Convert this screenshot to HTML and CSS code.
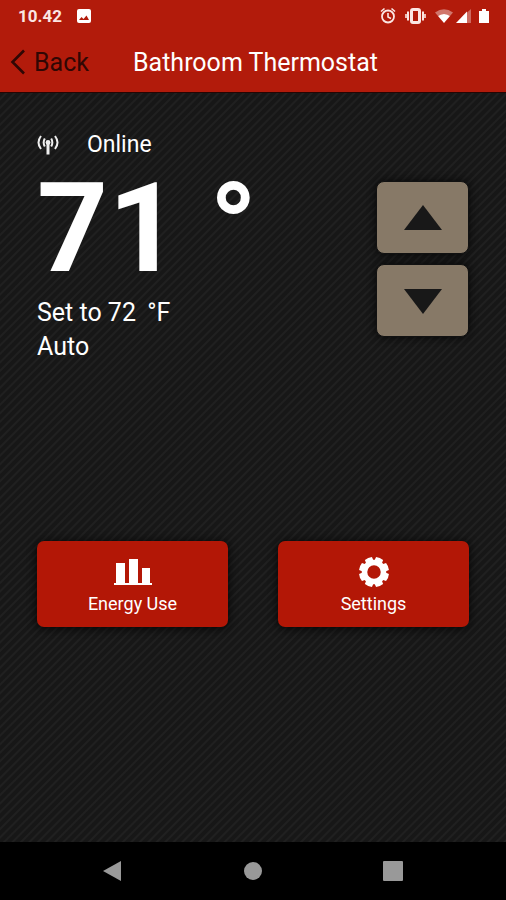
FILE: index.html
```html
<!DOCTYPE html>
<html lang="en">
<head>
<meta charset="utf-8">
<meta name="viewport" content="width=device-width, initial-scale=1">
<title>Bathroom Thermostat</title>
<link rel="stylesheet" href="styles.css">
</head>
<body>
<header class="header">
  <div class="status">
    <span class="clock">10.42</span>
    <svg class="photo" width="16" height="16" viewBox="0 0 16 16"><rect x="1" y="1" width="14" height="14" rx="2" fill="#fff"/><path d="M3 12L5.500 9l2 2 3-3.500L13 12z" fill="#b21b0b"/></svg>
    <svg class="tray" width="112" height="18" viewBox="0 0 112 18" fill="none" stroke="#fbe6e3">
      <circle cx="8" cy="9.500" r="6" stroke-width="1.800"/>
      <path d="M8 6v4l3 1.500M1 4.500L4.500 1.500M15 4.500L11.500 1.500" stroke-width="1.600"/>
      <rect x="31.500" y="2.500" width="8" height="13" rx="1.500" stroke-width="3"/>
      <path d="M28 4.500v9M43 4.500v9" stroke-width="2"/><path d="M26 7v4M45 7v4" stroke-width="1.600"/>
      <path d="M55 5.500Q64 -1 73 5.500L70 9Q64 5 58 9z" fill="#fff" fill-opacity=".4" stroke="none"/>
      <path d="M58 9Q64 5 70 9L64 16z" fill="#fff" stroke="none"/>
      <path d="M87 5.500L91 2v14h-4z" fill="#fff" fill-opacity=".35" stroke="none"/>
      <path d="M76 16L87 4.500V16z" fill="#fff" stroke="none"/>
      <path d="M99 4h3V2h4v2h3v12H99z" fill="#fff" stroke="none"/>
    </svg>
  </div>
  <div class="bar">
    <a class="back" href="#"><svg width="16" height="26" viewBox="0 0 16 26" fill="none" stroke="#300704" stroke-width="2.600"><path d="M14 1.500L2.500 13 14 24.500"/></svg>Back</a>
    <h1 class="title">Bathroom Thermostat</h1>
  </div>
</header>
<main class="main">
  <p class="online">
    <svg width="22" height="20" viewBox="0 0 22 20" fill="none" stroke="#eee" stroke-width="2"><path d="M11 7v12.500" stroke-width="3"/><circle cx="11" cy="7.500" r="2.400" fill="#eee" stroke="none"/><path d="M7.800 3.500Q5.500 7.500 7.800 11.500M14.200 3.500Q16.500 7.500 14.200 11.500M4 1Q-1 7.500 4 14M18 1Q23 7.500 18 14"/></svg>
    Online
  </p>
  <div class="reading">
    <div>
      <p class="temp">71<span class="degree">°</span></p>
      <p class="line">Set to 72 <span class="unit">°F</span></p>
      <p class="line">Auto</p>
    </div>
    <div class="steps">
      <button class="step" aria-label="Raise temperature"><svg width="40" height="26" viewBox="0 0 40 26"><path d="M20 0L39 25H1z" fill="#181818"/></svg></button>
      <button class="step" aria-label="Lower temperature"><svg width="40" height="26" viewBox="0 0 40 26"><path d="M20 26L39 1H1z" fill="#181818"/></svg></button>
    </div>
  </div>
  <div class="actions">
    <button class="action">
      <svg width="40" height="32" viewBox="0 0 40 32" fill="#fff"><path d="M1 27h38v2H1zM3 7h9v21H3zM16 3h9v25h-9zM29 12h8v16h-8z"/></svg>
      Energy Use
    </button>
    <button class="action">
      <svg width="32" height="32" viewBox="-16 -16 32 32"><circle r="9.500" fill="none" stroke="#fff" stroke-width="5.500"/><g fill="#fff"><path id="tooth" d="M-4 -10L-3.800 -14.600Q0 -15.800 3.800 -14.600L4 -10z" transform="rotate(22.500)"/><use href="#tooth" transform="rotate(45)"/><use href="#tooth" transform="rotate(90)"/><use href="#tooth" transform="rotate(135)"/><use href="#tooth" transform="rotate(180)"/><use href="#tooth" transform="rotate(225)"/><use href="#tooth" transform="rotate(270)"/><use href="#tooth" transform="rotate(315)"/></g></svg>
      Settings
    </button>
  </div>
</main>
<nav class="system" aria-label="System">
  <button class="key" aria-label="Back"><svg width="20" height="22" viewBox="0 0 20 22"><path d="M0 11L18 1v20z" fill="#999"/></svg></button>
  <button class="key" aria-label="Home"><svg width="20" height="20" viewBox="0 0 20 20"><circle cx="10" cy="10" r="9" fill="#999"/></svg></button>
  <button class="key" aria-label="Recent apps"><svg width="20" height="20" viewBox="0 0 20 20"><rect width="20" height="20" rx="1" fill="#999"/></svg></button>
</nav>
</body>
</html>
```
FILE: styles.css
```css
* { box-sizing: border-box; }
body {
  margin: 0;
  min-height: 100vh;
  display: flex;
  flex-direction: column;
  font-family: Roboto, "Liberation Sans", sans-serif;
  color: #fff;
  background: #1a1a1a;
}
h1, p { margin: 0; font-weight: 400; }
svg { display: block; flex: none; }
button { border: 0; padding: 0; font: inherit; color: inherit; cursor: pointer; }
.header { background: #b21b0b; border-bottom: 1px solid #240604; }
.status { display: flex; align-items: center; height: 32px; padding: 0 14px 0 18px; }
.clock { font-size: 17px; font-weight: 700; color: #fbe6e3; }
.photo { margin-left: 14px; }
.tray { margin-left: auto; }
.bar { display: grid; grid-template-columns: 1fr auto 1fr; align-items: center; height: 60px; padding: 0 5px 0 10px; }
.back { display: flex; align-items: center; gap: 8px; font-size: 25px; color: #300704; text-decoration: none; }
.title { font-size: 25px; }
.main {
  flex: 1;
  padding: 35px 37px 0 37px;
  background: repeating-linear-gradient(135deg, #171717 0 3px, #202020 4px 5px, #171717 6px);
}
.online { display: flex; align-items: center; gap: 28px; font-size: 23px; line-height: 34px; }
.reading { display: flex; justify-content: space-between; }
.temp { font-size: 124px; font-weight: 700; line-height: 134px; }
.degree { margin-left: 30px; }
.line { font-size: 25px; line-height: 34px; }
.unit { margin-left: 5px; }
.steps { display: flex; flex-direction: column; gap: 10px; padding-top: 19px; }
.step { width: 93px; height: 73px; display: grid; place-items: center; border: 1px solid #111; border-radius: 8px; background: #877967; box-shadow: 0 0 8px #080808; }
.actions { display: flex; gap: 50px; margin-top: 177px; }
.action {
  flex: 1;
  height: 86px;
  display: flex;
  flex-direction: column;
  align-items: center;
  justify-content: center;
  gap: 5px;
  padding-top: 3px;
  font-size: 18px;
  line-height: 22px;
  border-radius: 7px;
  background: #b31706;
  box-shadow: 0 1px 10px #050505;
}
.system { display: flex; justify-content: space-between; align-items: center; height: 58px; padding: 0 103px; background: #000; }
.key { background: none; }
```
